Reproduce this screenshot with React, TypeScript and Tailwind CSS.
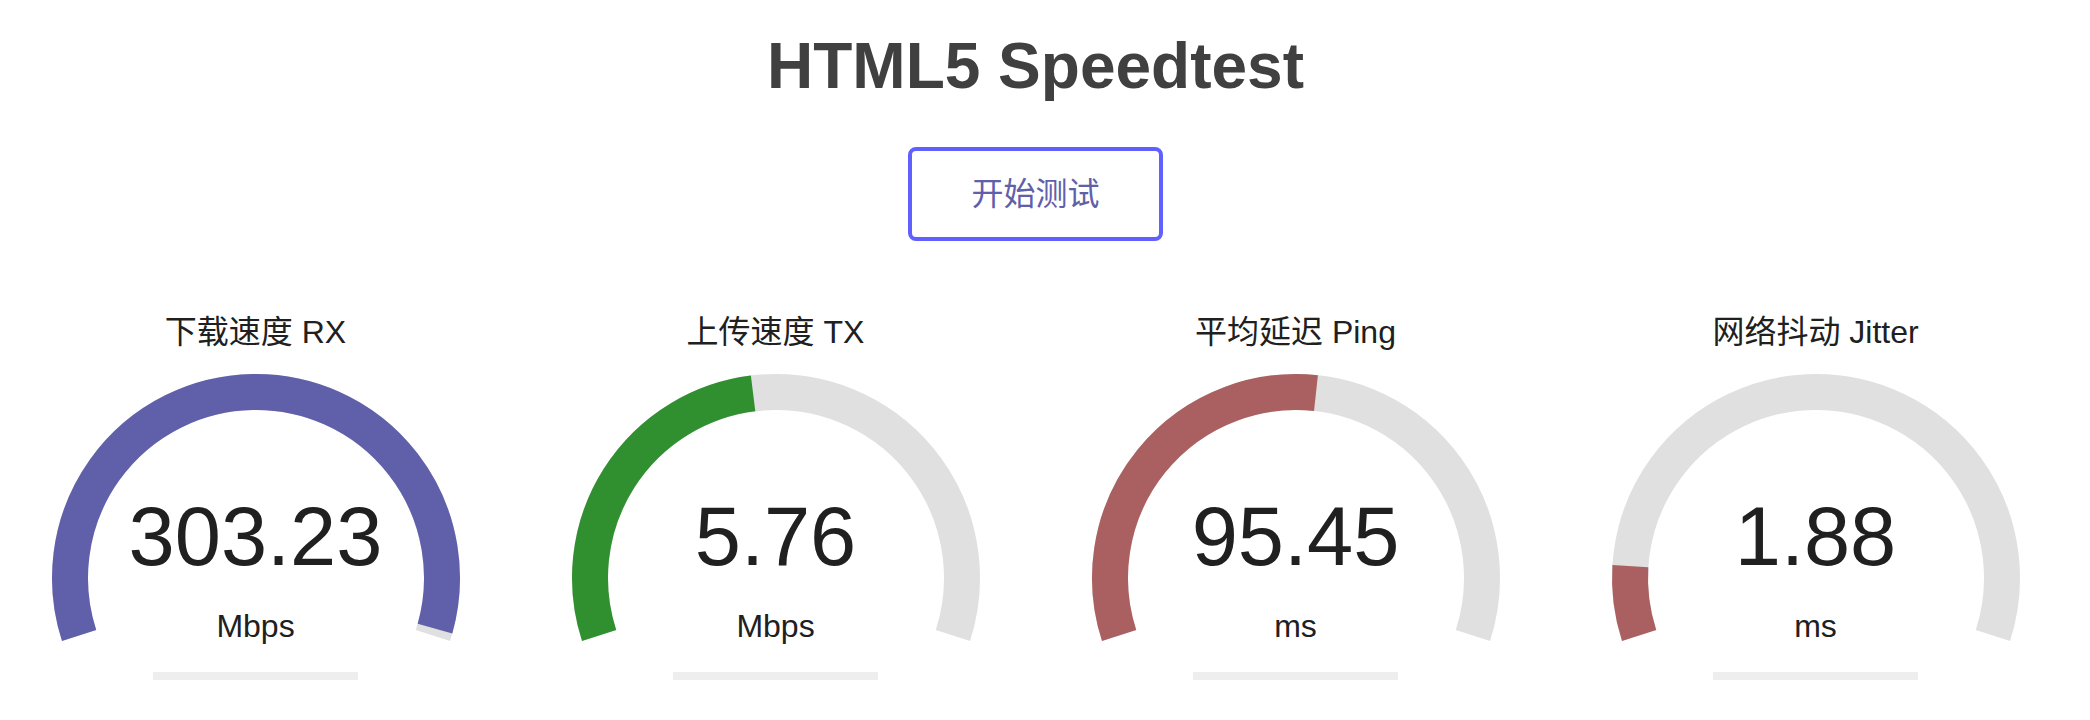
const meterBk = '#E0E0E0';

// same curves the speedtest uses to map a value onto the dial
const mbpsToAmount = (s: number) => 1 - 1 / Math.pow(1.3, Math.sqrt(s));
const msToAmount = (d: number) => 1 - 1 / Math.pow(1.08, Math.sqrt(d));

const gauges = [
  { label: '下载速度 RX', value: '303.23', unit: 'Mbps', amount: mbpsToAmount(303.23), color: '#6060AA' },
  { label: '上传速度 TX', value: '5.76', unit: 'Mbps', amount: mbpsToAmount(5.76), color: '#309030' },
  { label: '平均延迟 Ping', value: '95.45', unit: 'ms', amount: msToAmount(95.45), color: '#AA6060' },
  { label: '网络抖动 Jitter', value: '1.88', unit: 'ms', amount: msToAmount(1.88), color: '#AA6060' },
];

function arcPath(amount: number) {
  const cx = 260;
  const cy = 230;
  const r = 186;
  const a0 = -1.1 * Math.PI;
  const a1 = a0 + 1.2 * Math.PI * amount;
  const x0 = cx + r * Math.cos(a0);
  const y0 = cy + r * Math.sin(a0);
  const x1 = cx + r * Math.cos(a1);
  const y1 = cy + r * Math.sin(a1);
  const large = a1 - a0 > Math.PI ? 1 : 0;
  return `M ${x0} ${y0} A ${r} ${r} 0 ${large} 1 ${x1} ${y1}`;
}

function Gauge({ label, value, unit, amount, color }: (typeof gauges)[number]) {
  return (
    <div className="w-[520px] shrink-0 flex flex-col items-center">
      <div className="text-[32px] leading-[32px] text-[#202020]">{label}</div>

      <div className="relative w-full flex flex-col items-center pt-[147px]">
        {/* dial */}
        <svg className="absolute left-0 top-0 pointer-events-none" width="520" height="330" viewBox="0 0 520 330">
          <path d={arcPath(1)} fill="none" stroke={meterBk} strokeWidth="36" />
          <path d={arcPath(amount)} fill="none" stroke={color} strokeWidth="36" />
        </svg>

        <div className="relative text-[83px] leading-[83px] text-[#202020]">{value}</div>
        <div className="relative mt-[32px] text-[32px] leading-[32px] text-[#202020]">{unit}</div>
        <div className="relative mt-[30px] w-[205px] h-2 bg-[#EEEEEE]" />
      </div>
    </div>
  );
}

export default function App() {
  return (
    <div className="w-[2071px] min-h-[720px] bg-white font-['Liberation_Sans','Noto_Sans_CJK_SC',sans-serif]">
      <h1 className="pt-[34px] text-center text-[64px] leading-none font-bold text-[#404040]">HTML5 Speedtest</h1>

      <div className="mt-[49px] flex justify-center">
        <button className="w-[255px] h-[94px] border-4 border-[#6060FF] rounded-[8px] bg-white text-[32px] text-[#6060AA]">
          开始测试
        </button>
      </div>

      <div className="mt-[75px] flex justify-center">
        {gauges.map((g) => (
          <Gauge key={g.label} {...g} />
        ))}
      </div>
    </div>
  );
}
